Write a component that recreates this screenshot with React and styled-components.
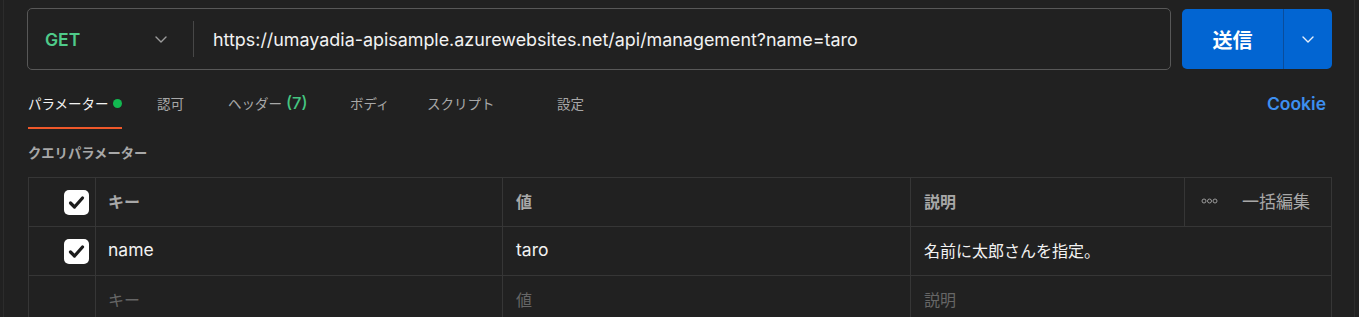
import React from 'react';
import styled, { createGlobalStyle } from 'styled-components';

const GlobalStyle = createGlobalStyle`
  html, body {
    margin: 0;
    padding: 0;
    background: #212121;
    overflow: hidden;
  }
  body {
    font-family: Inter, "Noto Sans CJK JP", sans-serif;
    color: #f0f0f0;
  }
`;

const tabs = [
  { label: 'パラメーター', w: 129, active: true, dot: true },
  { label: '認可', w: 71 },
  { label: 'ヘッダー', w: 122, count: 7 },
  { label: 'ボディ', w: 77 },
  { label: 'スクリプト', w: 130 },
  { label: '設定' },
];

function Chevron({ color }) {
  return (
    <svg width="12" height="7" viewBox="0 0 12 7" fill="none">
      <path d="M1 1l5 5 5-5" stroke={color} strokeWidth="1.4" strokeLinecap="round" strokeLinejoin="round" />
    </svg>
  );
}

function Check() {
  return (
    <CheckBox>
      <svg width="25" height="25" viewBox="0 0 25 25" fill="none">
        <path d="M6.5 13l4 4 8-9" stroke="#1c1c1c" strokeWidth="3.2" strokeLinecap="round" strokeLinejoin="round" />
      </svg>
    </CheckBox>
  );
}

function Dots() {
  return (
    <svg width="17" height="6" viewBox="0 0 17 6" fill="none">
      <circle cx="3" cy="3" r="2" stroke="#9a9a9a" strokeWidth="1" />
      <circle cx="8.5" cy="3" r="2" stroke="#9a9a9a" strokeWidth="1" />
      <circle cx="14" cy="3" r="2" stroke="#9a9a9a" strokeWidth="1" />
    </svg>
  );
}

function App() {
  return (
    <>
      <GlobalStyle />
      <Page>
        <Panel>
          <UrlBar>
            <UrlBox>
              <MethodSelect>
                <Method>GET</Method>
                <Chevron color="#9c9c9c" />
              </MethodSelect>
              <Divider />
              <UrlText>https://umayadia-apisample.azurewebsites.net/api/management?name=taro</UrlText>
            </UrlBox>
            <SendButton>
              <SendMain>送信</SendMain>
              <SendArrow>
                <Chevron color="#e8f0fb" />
              </SendArrow>
            </SendButton>
          </UrlBar>

          <TabBar>
            <TabList>
              {tabs.map((t) => (
                <Tab key={t.label} $w={t.w}>
                  <TabLabel $active={t.active}>
                    {t.label}
                    {t.count && <Count>({t.count})</Count>}
                    {t.dot && <Dot />}
                  </TabLabel>
                </Tab>
              ))}
            </TabList>
            <CookieLink>Cookie</CookieLink>
          </TabBar>

          <SectionTitle>クエリパラメーター</SectionTitle>

          <Table>
            <Row>
              <CheckCell>
                <Check />
              </CheckCell>
              <HeadCell>キー</HeadCell>
              <HeadCell>値</HeadCell>
              <LastHead>
                <HeadCell as="div">説明</HeadCell>
                <BulkEdit>
                  <Dots />
                  <span>一括編集</span>
                </BulkEdit>
              </LastHead>
            </Row>
            <Row>
              <CheckCell>
                <Check />
              </CheckCell>
              <Cell $latin>name</Cell>
              <Cell $latin>taro</Cell>
              <Cell>名前に太郎さんを指定。</Cell>
            </Row>
            <Row>
              <CheckCell />
              <Cell $placeholder>キー</Cell>
              <Cell $placeholder>値</Cell>
              <Cell $placeholder>説明</Cell>
            </Row>
          </Table>
        </Panel>
      </Page>
    </>
  );
}

const Page = styled.div`
  padding-left: 3px;
  height: 317px;
  overflow: hidden;
`;

const Panel = styled.div`
  width: 1352px;
  height: 100%;
  box-sizing: border-box;
  border-left: 1px solid #2c2c2c;
  border-right: 1px solid #2c2c2c;
  padding: 8px 22px 0 23px;
`;

const UrlBar = styled.div`
  display: flex;
  align-items: center;
  gap: 11px;
`;

const UrlBox = styled.div`
  flex: 1;
  height: 62px;
  box-sizing: border-box;
  border: 1px solid #585858;
  border-radius: 5px;
  display: flex;
  align-items: center;
`;

const MethodSelect = styled.div`
  width: 165px;
  box-sizing: border-box;
  padding: 0 26px 0 17px;
  display: flex;
  align-items: center;
  justify-content: space-between;
`;

const Method = styled.span`
  color: #4fcb8a;
  font-size: 17.5px;
  font-weight: 600;
`;

const Divider = styled.div`
  width: 1px;
  height: 36px;
  background: #474747;
`;

const UrlText = styled.div`
  padding-left: 19px;
  font-size: 17.9px;
  color: #f2f2f2;
  white-space: nowrap;
`;

const SendButton = styled.div`
  width: 150px;
  height: 60px;
  border-radius: 5px;
  background: #0265d2;
  display: flex;
  overflow: hidden;
`;

const SendMain = styled.div`
  width: 101px;
  display: flex;
  align-items: center;
  justify-content: center;
  font-family: "Noto Sans CJK JP", sans-serif;
  font-size: 20px;
  font-weight: 700;
  color: #ffffff;
  border-right: 1px solid #0a4d9c;
`;

const SendArrow = styled.div`
  flex: 1;
  display: flex;
  align-items: center;
  justify-content: center;
`;

const TabBar = styled.div`
  margin-top: 10px;
  margin-left: 1px;
  padding-right: 6px;
  display: flex;
  justify-content: space-between;
  align-items: center;
`;

const TabList = styled.div`
  display: flex;
`;

const Tab = styled.div`
  width: ${(p) => (p.$w ? `${p.$w}px` : 'auto')};
  height: 49px;
  display: flex;
`;

const TabLabel = styled.div`
  display: flex;
  align-items: center;
  box-sizing: border-box;
  height: 100%;
  padding-bottom: 1px;
  border-bottom: 2px solid ${(p) => (p.$active ? '#f0582a' : 'transparent')};
  font-family: "Noto Sans CJK JP", sans-serif;
  font-size: 13.5px;
  color: ${(p) => (p.$active ? '#f2f2f2' : '#a8a8a8')};
  white-space: nowrap;
`;

const Count = styled.span`
  margin-left: 4px;
  font-family: Inter, sans-serif;
  font-size: 16.5px;
  font-weight: 500;
  color: #45c681;
`;

const Dot = styled.span`
  width: 9px;
  height: 9px;
  margin-left: 4px;
  border-radius: 50%;
  background: #12b850;
`;

const CookieLink = styled.div`
  padding-bottom: 2px;
  font-size: 17.5px;
  font-weight: 600;
  color: #3d8ff0;
`;

const SectionTitle = styled.div`
  margin: 14px 0 0 1px;
  height: 20px;
  line-height: 20px;
  font-family: "Noto Sans CJK JP", sans-serif;
  font-size: 13.3px;
  font-weight: 600;
  color: #a8a8a8;
`;

const Table = styled.div`
  margin: 14px 0 0 1px;
  border: 1px solid #363636;
  border-bottom: none;
`;

const Row = styled.div`
  display: grid;
  grid-template-columns: 67px 407px 408px 1fr;
  height: 49px;
  box-sizing: border-box;
  border-bottom: 1px solid #363636;
`;

const Cell = styled.div`
  display: flex;
  align-items: center;
  box-sizing: border-box;
  padding-left: 12px;
  padding-bottom: 3px;
  border-right: 1px solid #363636;
  font-family: Inter, "Noto Sans CJK JP", sans-serif;
  font-size: ${(p) => (p.$latin ? '17.5px' : '16px')};
  color: ${(p) => (p.$placeholder ? '#666666' : '#f2f2f2')};
  &:nth-child(3) {
    padding-left: 13px;
  }
  &:last-child {
    border-right: none;
    padding-left: 13px;
  }
`;

const HeadCell = styled(Cell)`
  font-family: "Noto Sans CJK JP", sans-serif;
  font-weight: 700;
  color: #a8a8a8;
`;

const CheckCell = styled.div`
  display: flex;
  align-items: center;
  justify-content: flex-end;
  padding-right: 6px;
  border-right: 1px solid #363636;
`;

const CheckBox = styled.div`
  width: 25px;
  height: 25px;
  border-radius: 5px;
  background: #ffffff;
  display: flex;
`;

const LastHead = styled.div`
  display: flex;
  & > div:first-child {
    width: 274px;
    padding-left: 13px;
    border-right: 1px solid #363636;
  }
`;

const BulkEdit = styled.div`
  flex: 1;
  display: flex;
  align-items: center;
  justify-content: space-between;
  padding: 0 21px 3px 16px;
  font-family: "Noto Sans CJK JP", sans-serif;
  font-size: 17px;
  color: #a8a8a8;
`;

export default App;
